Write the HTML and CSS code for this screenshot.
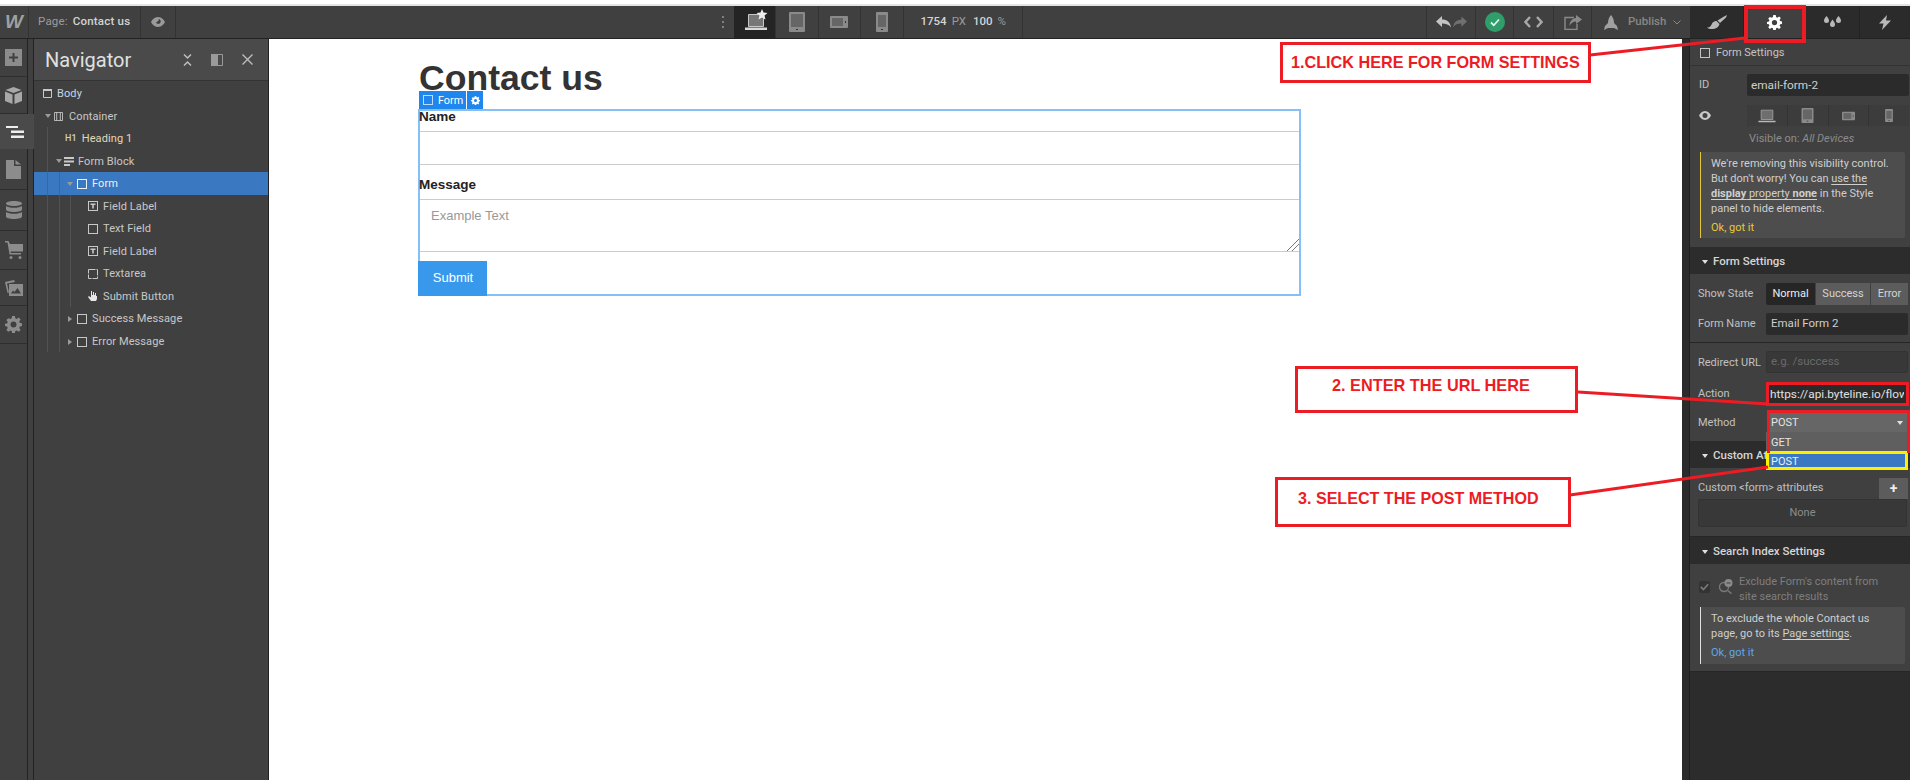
FILE: index.html
```html
<!DOCTYPE html>
<html lang="en">
<head>
<meta charset="utf-8">
<title>Contact us</title>
<link rel="stylesheet" href="styles.css">
</head>
<body>
<svg class="defs" width="0" height="0">
  <defs>
    <symbol id="laptop" viewBox="0 0 22 18"><path fill="#6e6e6e" stroke="#a8a8a8" d="M3.500 1.500h15v12h-15z"/><path fill="#b8b8b8" d="M0 15h22v2H0z"/></symbol>
    <symbol id="tablet" viewBox="0 0 16 20"><rect width="16" height="20" rx="1" fill="#8a8a8a"/><rect x="2" y="2" width="12" height="13" fill="#666"/><rect x="7" y="17" width="2" height="1" fill="#333"/></symbol>
    <symbol id="land" viewBox="0 0 18 12"><rect width="18" height="12" rx="1" fill="#8a8a8a"/><rect x="2" y="2" width="11" height="8" fill="#666"/><rect x="15" y="5" width="1" height="2" fill="#333"/></symbol>
    <symbol id="phone" viewBox="0 0 12 20"><rect width="12" height="20" rx="1" fill="#8a8a8a"/><rect x="2" y="3" width="8" height="12" fill="#666"/><rect x="5" y="17" width="2" height="1" fill="#333"/></symbol>
    <symbol id="gear" viewBox="0 0 16 16"><path fill="currentColor" fill-rule="evenodd" d="M6.700 0h2.600l.4 2.200 1.300.6L12.900 1.500l1.800 1.800-1.300 1.900.6 1.300 2 .4v2.600l-2 .4-.6 1.300 1.300 1.900-1.800 1.800-1.900-1.300-1.300.6-.4 2.200H6.700l-.4-2.200-1.300-.6-1.900 1.300-1.800-1.800 1.300-1.900-.6-1.300-2-.4V7.400l2-.4.6-1.300-1.300-1.900 1.800-1.800L5 2.800l1.300-.6zM8 5.200a2.800 2.800 0 1 0 0 5.600 2.800 2.800 0 0 0 0-5.600z"/></symbol>
    <symbol id="box" viewBox="0 0 10 10"><rect x=".5" y=".5" width="9" height="9" fill="none" stroke="currentColor"/></symbol>
    <symbol id="tfield" viewBox="0 0 10 10"><rect x=".5" y=".5" width="9" height="9" fill="none" stroke="currentColor"/><path fill="currentColor" d="M2.500 2.500h5v1.500h-1.700v3.500H4.200V4H2.500z"/></symbol>
    <symbol id="check" viewBox="0 0 12 12"><path fill="none" stroke="currentColor" stroke-width="1.800" d="M2 6.500l2.800 2.800L10 3.500"/></symbol>
  </defs>
</svg>

<div class="app">
  <div class="strip"></div>

  <header class="topbar">
    <div class="cell logo-cell"><span class="logo">W</span></div>
    <div class="cell page-cell"><span class="dim">Page:</span><span class="page-name">Contact us</span></div>
    <div class="cell eye-cell">
      <svg width="14" height="12" viewBox="0 0 14 12"><path fill="#9a9a9a" fill-rule="evenodd" d="M7 1C3.500 1 1 4 0 6c1 2 3.500 5 7 5s6-3 7-5c-1-2-3.500-5-7-5zm1 2a2.500 2.500 0 1 1-3 3.500A4 4 0 0 0 8 3z"/></svg>
    </div>
    <div class="top-center">
      <div class="dots"><i></i><i></i><i></i></div>
      <div class="dev dev-active">
        <svg class="dev-ic" width="24" height="22" viewBox="0 0 24 22"><path fill="#777" stroke="#c8c8c8" d="M3.500 5.500h15v12h-15z"/><path fill="#d8d8d8" d="M0 18.500h22v2.500H0z"/><path fill="#eee" d="M17 0l1.500 3.500L22.500 4l-3 2.500 1 4-3.500-2-3.500 2 1-4-3-2.500 4-.5z"/></svg>
      </div>
      <div class="dev"><svg width="16" height="20"><use href="#tablet"/></svg></div>
      <div class="dev"><svg width="18" height="12"><use href="#land"/></svg></div>
      <div class="dev"><svg width="12" height="20"><use href="#phone"/></svg></div>
      <div class="size"><b>1754</b><span>PX</span><b>100</b><span>%</span></div>
    </div>
    <div class="top-right">
      <div class="tool tool-undo">
        <svg width="15" height="12" viewBox="0 0 15 12"><path fill="#c4c4c4" d="M6 0v3.500c5 0 8 2.500 9 8-2-3-5-4-9-4V11L0 5.500z"/></svg>
        <svg width="14" height="12" viewBox="0 0 15 12"><path fill="#707070" d="M9 0v3.500c-5 0-8 2.500-9 8 2-3 5-4 9-4V11l6-5.500z"/></svg>
      </div>
      <div class="tool tool-ok"><span class="okdot"><svg width="12" height="12"><use href="#check"/></svg></span></div>
      <div class="tool tool-code">
        <svg width="19" height="12" viewBox="0 0 19 12"><path fill="none" stroke="#a8a8a8" stroke-width="2.400" d="M6 1L1.500 6 6 11M13 1l4.500 5L13 11"/></svg>
      </div>
      <div class="tool tool-share">
        <svg width="18" height="15" viewBox="0 0 18 15"><path fill="none" stroke="#8a8a8a" stroke-width="1.400" d="M10 2.500H1v12h12V9"/><path fill="#8a8a8a" d="M12 0l6 4.500L12 9V6.500C9 6.500 7 8 5.500 11c0-4 2-7.500 6.500-8z"/></svg>
      </div>
      <div class="tool tool-pub">
        <svg width="16" height="15" viewBox="0 0 16 15"><path fill="#a0a0a0" d="M8 0c2 2 3 5 3 8l3 3 1 4-4-2H5l-4 2 1-4 3-3c0-3 1-6 3-8z"/></svg>
        <span class="pub-text">Publish</span>
        <svg width="8" height="5" viewBox="0 0 8 5"><path fill="none" stroke="#8a8a8a" d="M.5.500L4 4 7.500.5"/></svg>
      </div>
    </div>
    <nav class="tabs">
      <div class="tab">
        <svg width="20" height="14" viewBox="0 0 20 14"><path fill="#b8b8b8" d="M20 0l-1 2.500-6 5.500-2.500-2.500L17 1.500zM9.500 6l3 3c-.5 3-4 5-7.500 5-2 0-4-.5-5-1.500 3.500 0 4-2 5-4 1-1.800 2.800-2.700 4.500-2.500z"/></svg>
      </div>
      <div class="tab tab-on"><svg class="gear-w" width="15" height="15"><use href="#gear"/></svg></div>
      <div class="tab">
        <svg width="17" height="13" viewBox="0 0 17 13"><path fill="#b8b8b8" d="M2.500 0C4 2 5 3.200 5 4.500a2.500 2.500 0 0 1-5 0C0 3.200 1 2 2.500 0zM14.500 0C16 2 17 3.200 17 4.500a2.500 2.500 0 0 1-5 0c0-1.300 1-2.500 2.500-4.500zM8.500 3.500C10 5.500 11 6.900 11 8.500a2.500 2.500 0 0 1-5 0c0-1.600 1-3 2.500-5z"/></svg>
      </div>
      <div class="tab tab-last">
        <svg width="12" height="15" viewBox="0 0 12 15"><path fill="#b8b8b8" d="M8 0L0 8.500h4.500L3 15l9-9.500H7z"/></svg>
      </div>
    </nav>
  </header>

  <div class="main">
    <aside class="rail">
      <div class="rail-item r-add"><svg width="17" height="17" viewBox="0 0 17 17"><path fill="#8c8c8c" fill-rule="evenodd" d="M0 0h17v17H0zm7.500 4v3.500H4v2h3.500V13h2V9.500H13v-2H9.500V4z"/></svg></div>
      <div class="rail-item r-cube"><svg width="17" height="17" viewBox="0 0 17 17"><path fill="#a8a8a8" d="M8.500 0l8 3-8 3-8-3zM0 4.500l7.500 3V17L0 14zM17 4.500l-7.500 3V17l7.500-3z"/></svg></div>
      <div class="rail-item r-nav"><svg width="18" height="12" viewBox="0 0 18 12"><path fill="#eee" d="M0 0h12v2H0zM5 4.500h13v2.500H5zM5 9.500h13V12H5z"/></svg></div>
      <div class="rail-item r-pages"><svg width="15" height="19" viewBox="0 0 15 19"><path fill="#8c8c8c" d="M0 0h8v6h7v13H0zM9.500 0L15 4.500H9.500z"/></svg></div>
      <div class="rail-item r-cms"><svg width="16" height="18" viewBox="0 0 16 18"><path fill="#8c8c8c" d="M8 0c4.500 0 8 1 8 2.500S12.500 5 8 5 0 4 0 2.500 3.500 0 8 0zM0 5c1.500 1.200 4.500 1.800 8 1.800S14.500 6.200 16 5v3.500c0 1.500-3.500 2.500-8 2.500s-8-1-8-2.500zM0 11c1.500 1.200 4.500 1.800 8 1.800s6.500-.6 8-1.800v4.500c0 1.500-3.500 2.500-8 2.500s-8-1-8-2.500z"/></svg></div>
      <div class="rail-item r-cart"><svg width="18" height="18" viewBox="0 0 18 18"><path fill="#8c8c8c" d="M0 0h3.500L5 3h13v7.500H5.500L5.800 12H16v1.500H4.500L2.500 1.500H0z"/><circle cx="6" cy="16.500" r="1.500" fill="#8c8c8c"/><circle cx="15" cy="16.500" r="1.500" fill="#8c8c8c"/></svg></div>
      <div class="rail-item r-assets"><svg width="18" height="16" viewBox="0 0 18 16"><path fill="#8c8c8c" d="M0 2l9-2 1 2-8 1.500 2 9-1.500.5z"/><path fill="#8c8c8c" fill-rule="evenodd" d="M4 4h14v12H4zm2 9.500h10L12.500 8 9.500 12 8 10.500z"/></svg></div>
      <div class="rail-item r-set"><svg class="gear-g" width="17" height="17"><use href="#gear"/></svg></div>
    </aside>
    <div class="rail-gap"></div>

    <section class="nav">
      <div class="nav-head">
        <h2 class="nav-title">Navigator</h2>
        <svg width="9" height="12" viewBox="0 0 9 12"><path fill="none" stroke="#bdbdbd" stroke-width="1.500" d="M1 .5l3.500 3.500L8 .5M1 11.500L4.500 8 8 11.500"/></svg>
        <svg width="12" height="12" viewBox="0 0 12 12"><path fill="#9a9a9a" d="M0 0h7v12H0z"/><path fill="none" stroke="#9a9a9a" d="M7 .5h4.500v11H7"/></svg>
        <svg width="11" height="11" viewBox="0 0 11 11"><path fill="none" stroke="#bdbdbd" stroke-width="1.400" d="M.5.500l10 10M10.500.5l-10 10"/></svg>
      </div>
      <ul class="tree">
        <li class="row lv-body"><svg width="9" height="9" viewBox="0 0 9 9"><path fill="none" stroke="currentColor" d="M.5.500h8v8h-8z"/><path fill="currentColor" d="M0 0h9v2H0z"/></svg><span class="t-blue">Body</span></li>
        <li class="row lv-cont"><i class="tri"></i><svg width="9" height="9" viewBox="0 0 10 10"><path fill="none" stroke="currentColor" d="M.5.500h9v9h-9zM3 .5v9M7 .5v9"/></svg><span>Container</span></li>
        <li class="row lv-head"><b class="h1">H1</b><span class="t-gold">Heading 1</span></li>
        <li class="row lv-fblock"><i class="tri"></i><svg width="10" height="9" viewBox="0 0 10 9"><path fill="currentColor" d="M0 0h10v2H0zM0 3.500h10v2H0zM0 7h6v2H0z"/></svg><span>Form Block</span></li>
        <li class="row lv-form row-on"><i class="tri"></i><svg width="10" height="10"><use href="#box"/></svg><span>Form</span></li>
        <li class="row lv-leaf"><svg width="10" height="10"><use href="#tfield"/></svg><span>Field Label</span></li>
        <li class="row lv-leaf"><svg width="10" height="10"><use href="#box"/></svg><span>Text Field</span></li>
        <li class="row lv-leaf"><svg width="10" height="10"><use href="#tfield"/></svg><span>Field Label</span></li>
        <li class="row lv-leaf"><svg width="10" height="10" viewBox="0 0 10 10"><path fill="none" stroke="currentColor" stroke-dasharray="7 1" d="M.5.500h9v9h-9z"/></svg><span>Textarea</span></li>
        <li class="row lv-leaf"><svg width="10" height="10" viewBox="0 0 10 10"><path fill="#e6e6e6" d="M3 0h1v4h1V1h1v3h1V2h1v3h1v3l-1 2H3L0 6l1-1 2 1.500z"/></svg><span>Submit Button</span></li>
        <li class="row lv-form"><i class="tri tri-r"></i><svg width="10" height="10"><use href="#box"/></svg><span>Success Message</span></li>
        <li class="row lv-form"><i class="tri tri-r"></i><svg width="10" height="10"><use href="#box"/></svg><span>Error Message</span></li>
        <li class="guide g1"></li>
        <li class="guide g2"></li>
        <li class="guide g3"></li>
      </ul>
    </section>

    <main class="canvas">
      <div class="container">
        <h1 class="title">Contact us</h1>
        <form class="form">
          <div class="form-tag">
            <span class="tag-name"><svg width="10" height="10"><use href="#box"/></svg>Form</span>
            <span class="tag-gear"><svg width="9" height="9"><use href="#gear"/></svg></span>
          </div>
          <div class="label label-first">Name</div>
          <div class="input"></div>
          <div class="label">Message</div>
          <div class="input area">Example Text
            <svg class="grip" width="12" height="12" viewBox="0 0 12 12"><path fill="none" stroke="#777" d="M0 12L12 0M5 12l7-7"/></svg>
          </div>
          <div class="submit">Submit</div>
        </form>
      </div>
    </main>

    <div class="gutter"></div>

    <aside class="panel">
      <div class="selected"><svg width="10" height="10"><use href="#box"/></svg><span>Form Settings</span></div>

      <div class="block block-id">
        <div class="id-row"><span class="lbl">ID</span><div class="field field-id">email-form-2</div></div>
        <div class="id-row vis-row">
          <svg class="eye" width="12" height="9" viewBox="0 0 12 9"><path fill="#c8c8c8" fill-rule="evenodd" d="M6 0C3 0 1 2.500 0 4.500 1 6.500 3 9 6 9s5-2.500 6-4.500C11 2.500 9 0 6 0zm0 2a2.500 2.500 0 1 1 0 5 2.500 2.500 0 0 1 0-5z"/></svg>
          <div class="seg4">
            <span><svg width="20" height="14"><use href="#laptop"/></svg></span>
            <span><svg width="13" height="15"><use href="#tablet"/></svg></span>
            <span><svg width="13" height="10"><use href="#land"/></svg></span>
            <span><svg width="10" height="13"><use href="#phone"/></svg></span>
          </div>
        </div>
        <div class="visible">Visible on: <em>All Devices</em></div>
        <div class="notice notice-y">
          <p>We're removing this visibility control.<br>But don't worry! You can <u>use the</u><br><u><b>display</b> property <b>none</b></u> in the Style<br>panel to hide elements.</p>
          <div class="got got-y">Ok, got it</div>
        </div>
      </div>

      <div class="sec-head"><i class="tri tri-w"></i>Form Settings</div>
      <div class="block block-state">
        <div class="form-row"><span class="lbl">Show State</span>
          <div class="seg3"><span class="seg-on">Normal</span><span class="seg-s">Success</span><span class="seg-e">Error</span></div>
        </div>
        <div class="form-row form-row-2"><span class="lbl">Form Name</span><div class="field">Email Form 2</div></div>
      </div>
      <div class="block block-redirect">
        <div class="form-row"><span class="lbl lbl-low">Redirect URL</span><div class="field field-ph">e.g. /success</div></div>
        <div class="form-row action-row"><span class="lbl">Action</span><div class="field field-action"><span class="clip">https://api.byteline.io/flow</span></div></div>
        <div class="form-row method-row"><span class="lbl">Method</span>
          <div class="select"><span>POST</span><i class="tri tri-w"></i></div>
          <div class="dropdown">
            <div class="opt">GET</div>
            <div class="opt opt-on">POST</div>
          </div>
        </div>
      </div>
      <div class="sec-head"><i class="tri tri-w"></i>Custom Attributes</div>
      <div class="block block-attr">
        <div class="attr-row"><span class="lbl">Custom &lt;form&gt; attributes</span><span class="plus">+</span></div>
        <div class="none">None</div>
      </div>
      <div class="sec-head"><i class="tri tri-w"></i>Search Index Settings</div>
      <div class="block block-search">
        <div class="exclude">
          <span class="chk"><svg width="11" height="11"><use href="#check"/></svg></span>
          <svg class="search-ic" width="15" height="15" viewBox="0 0 15 15"><circle cx="6" cy="8" r="4.500" fill="none" stroke="#7a7a7a" stroke-width="1.300"/><path stroke="#7a7a7a" stroke-width="1.500" d="M9.500 11.500l4 3"/><circle cx="10.500" cy="4" r="4" fill="#8a8a8a"/><path stroke="#404040" d="M8.500 4h4"/></svg>
          <span class="ex-text">Exclude Form's content from<br>site search results</span>
        </div>
        <div class="notice notice-w">
          <p>To exclude the whole Contact us<br>page, go to its <u>Page settings</u>.</p>
          <div class="got got-b">Ok, got it</div>
        </div>
      </div>
      <div class="panel-end"></div>
    </aside>
  </div>

  <svg class="lines" width="1910" height="780" viewBox="0 0 1910 780">
    <path d="M1590 55L1745 38M1578 392L1768 404M1570 495L1768 467" fill="none" stroke="#ed1c24" stroke-width="3"/>
  </svg>
  <div class="red-tab"></div>
  <div class="red-method"></div>
  <div class="note note-1">1.CLICK HERE FOR FORM SETTINGS</div>
  <div class="note note-2">2. ENTER THE URL HERE</div>
  <div class="note note-3">3. SELECT THE POST METHOD</div>
</div>
</body>
</html>
```

FILE: styles.css
```css
* { box-sizing: border-box; }
html, body { margin: 0; height: 100%; overflow: hidden; background: #fff; }
body { font: 11px/1.2 Roboto, "Liberation Sans", sans-serif; color: #d9d9d9; }
.defs { position: absolute; }
svg { display: block; flex: none; }
p { margin: 0; }
ul { margin: 0; padding: 0; list-style: none; }

.app { position: relative; width: 1910px; height: 780px; display: flex; flex-direction: column; }
.strip { height: 6px; flex: none; background: linear-gradient(#fff 0, #fff 4px, #e4e4e4 4px); }

/* top bar */
.topbar { height: 33px; flex: none; display: flex; background: #404040; border-bottom: 1px solid #222; }
.cell { display: flex; align-items: center; border-right: 1px solid #333; }
.logo-cell { width: 29px; justify-content: center; }
.logo { font: italic 700 19px "Liberation Sans", sans-serif; color: #a0a0a0; }
.page-cell { width: 112px; padding-left: 9px; font-size: 11.500px; letter-spacing: .2px; }
.dim { color: #9c9c9c; margin-right: 5px; }
.page-name { color: #d4d4d4; font-weight: 500; }
.eye-cell { width: 35px; justify-content: center; }
.top-center { margin-left: 535px; display: flex; align-items: stretch; }
.dots { width: 23px; display: flex; flex-direction: column; gap: 3px; justify-content: center; align-items: center; }
.dots i { width: 2px; height: 2px; background: #808080; }
.dev { width: 42.500px; display: flex; align-items: center; justify-content: center; border-right: 1px solid #333; }
.dev-active { background: #242424; width: 42px; }
.dev-ic { margin-top: -4px; margin-left: 4px; }
.size { width: 119px; padding-left: 17px; display: flex; align-items: center; font-size: 11.500px; border-right: 1px solid #333; }
.size b { font-weight: 500; color: #d4d4d4; }
.size span { color: #9a9a9a; margin: 0 7px 0 5px; }
.top-right { margin-left: auto; display: flex; }
.tool { display: flex; align-items: center; justify-content: center; border-left: 1px solid #333; }
.tool-undo { width: 49px; gap: 2px; }
.tool-ok { width: 38px; }
.okdot { width: 20px; height: 20px; border-radius: 50%; background: #2f9e6b; color: #e6f2ec; display: flex; align-items: center; justify-content: center; }
.tool-code { width: 40px; }
.tool-share { width: 38px; }
.tool-pub { width: 99px; gap: 6px; justify-content: flex-start; padding-left: 11px; }
.pub-text { color: #888; font-size: 11.500px; font-weight: 500; margin-left: 3px; margin-right: 1px; }
.tabs { width: 220px; display: flex; background: #2b2b2b; }
.tab { width: 54px; display: flex; align-items: center; justify-content: center; border-right: 1px solid #222; }
.tab-on { width: 62px; background: #404040; }
.tab-last { width: 50px; border-right: 0; }
.gear-w { color: #fff; }
.gear-g { color: #8c8c8c; }

/* main */
.main { flex: 1; min-height: 0; display: flex; }
.rail { width: 28px; flex: none; background: #404040; border-right: 1px solid #222; display: flex; flex-direction: column; }
.rail-item { display: flex; align-items: center; justify-content: center; border-bottom: 1px solid #2e2e2e; }
.r-add { height: 38px; }
.r-cube { height: 37px; }
.r-nav { height: 35px; width: 34px; background: #4a4a4a; position: relative; border-bottom: 0; padding-right: 5px; }
.r-pages { height: 41px; }
.r-cms { height: 41px; }
.r-cart { height: 39px; }
.r-assets { height: 36px; }
.r-set { height: 38px; }
.rail-gap { width: 6px; flex: none; background: #404040; border-right: 1px solid #222; }

/* navigator */
.nav { width: 235px; flex: none; background: #404040; border-right: 1px solid #222; display: flex; flex-direction: column; }
.nav-head { height: 42px; flex: none; display: flex; align-items: center; gap: 19px; padding: 0 15px 0 11px; background: #4a4a4a; border-bottom: 1px solid #333; }
.nav-title { margin: 0 auto 0 0; font: 400 20px Roboto, sans-serif; color: #e0e0e0; }
.tree { position: relative; flex: 1; padding-top: 1.300px; }
.row { height: 22.550px; display: flex; align-items: center; color: #c8c8c8; gap: 5px; font-size: 11px; letter-spacing: .1px; white-space: nowrap; position: relative; }
.row-on { background: #3a78c2; color: #f0f0f0; }
.t-blue { color: #c4d6e8; }
.t-gold { color: #e2d8b8; }
.tri { width: 0; height: 0; border-style: solid; border-width: 4px 3px 0; border-color: #9a9a9a transparent transparent; flex: none; }
.tri-r { border-width: 3px 0 3px 4px; border-color: transparent transparent transparent #9a9a9a; margin: 0 1px; }
.tri-w { border-color: #e0e0e0 transparent transparent; }
.h1 { font-size: 9px; font-weight: 500; color: #d0d0d0; margin-right: 0; }
.lv-body { padding-left: 9px; }
.lv-cont { padding-left: 11px; gap: 3px; }
.lv-cont span { margin-left: 3px; }
.lv-head { padding-left: 31px; gap: 5px; }
.lv-fblock { padding-left: 22px; gap: 2px; }
.lv-fblock span { margin-left: 2px; }
.lv-form { padding-left: 33px; gap: 4px; }
.lv-form span { margin-left: 1px; }
.lv-leaf { padding-left: 54px; }
.guide { position: absolute; width: 1px; background: #5a5a5a; opacity: .7; }
.g1 { left: 13px; top: 46px; height: 225px; }
.g2 { left: 25px; top: 91px; height: 180px; }
.g3 { left: 36px; top: 114px; height: 112px; }

/* canvas */
.canvas { flex: 1; min-width: 0; background: #fff; padding: 26px 0 0 150px; }
.container { width: 882px; }
.title { margin: 0; font: 700 35.600px/26px "Liberation Sans", Arial, sans-serif; color: #333; white-space: nowrap; }
.form { position: relative; margin: 18px 0 0 -1px; width: 883px; height: 187px; border: 2px solid #86bff6; color: #222; font-family: "Liberation Sans", Arial, sans-serif; }
.form-tag { position: absolute; left: -1px; top: -20px; height: 18px; display: flex; gap: 1px; color: #fff; font: 10.800px Roboto, sans-serif; }
.tag-name { width: 47px; background: #1f86ee; display: flex; align-items: center; gap: 5px; padding-left: 4px; }
.tag-name svg { color: #bcdcff; }
.tag-gear { width: 16px; background: #1f86ee; display: flex; align-items: center; justify-content: center; }
.label { height: 25px; padding-top: 1px; line-height: 20px; font-weight: 700; font-size: 13.500px; margin-top: 9px; margin-left: -1px; }
.label-first { margin-top: 0; padding-top: 0; height: 20px; line-height: 11px; }
.input { height: 34px; border: solid #ccc; border-width: 1px 0; }
.area { position: relative; height: 53px; padding: 7px 11px; color: #999; font-size: 13px; line-height: 18px; }
.grip { position: absolute; right: 0; bottom: 0; }
.submit { position: absolute; left: -2px; bottom: -2px; width: 69px; height: 35px; padding: 0 0 1px 1px; background: #3898ec; color: #fff; font-size: 13px; display: flex; align-items: center; justify-content: center; }

.gutter { width: 8px; flex: none; background: #2b2b2b; border-right: 1px solid #1f1f1f; }

/* panel */
.panel { width: 220px; flex: none; background: #2c2c2c; display: flex; flex-direction: column; font-size: 11px; }
.selected { height: 27px; flex: none; display: flex; align-items: center; gap: 6px; padding: 2px 0 0 10px; background: #404040; border-bottom: 1px solid #333; color: #c4c4c4; font-size: 11px; }
.block { background: #404040; padding: 0 5px 0 8px; border-bottom: 1px solid #262626; flex: none; }
.lbl { color: #c0c0c0; }
.lbl-low { position: relative; top: 1px; }
.block-id { height: 181px; padding: 8px 1px 0 9px; border-bottom: 0; }
.id-row { display: flex; align-items: center; justify-content: space-between; padding-right: 0; }
.vis-row { margin-top: 9px; }
.field { background: #2b2b2b; border-radius: 2px; color: #cfcfcf; height: 22px; display: flex; align-items: center; padding: 0 4px; font-size: 11.500px; white-space: nowrap; overflow: hidden; border: 1px solid #2b2b2b; }
.field-id { width: 162px; font-size: 11.800px; padding-left: 3px; }
.eye { margin-left: 0; }
.seg4 { width: 162px; height: 21px; display: flex; gap: 1px; background: #333; border-radius: 2px; overflow: hidden; }
.seg4 span { flex: 1; background: #3c3c3c; display: flex; align-items: center; justify-content: center; }
.visible { margin: 6px 0 0 50px; color: #8c8c8c; font-size: 11px; line-height: 13px; }
.visible em { font-style: italic; }
.notice { background: #4d4d4d; border-radius: 0 2px 2px 0; padding: 4px 9px 0 10px; width: 205px; margin-left: 1px; font-size: 11px; line-height: 15px; color: #cfcfcf; }
.notice-y { height: 86px; margin-top: 7px; border-left: 1px solid #e4c83a; }
.notice u { text-underline-offset: 2px; }
.notice b { font-weight: 700; }
.got { margin-top: 4px; }
.got-y { color: #e8c93a; }
.got-b { color: #5fa8e8; }
.sec-head { height: 27px; flex: none; display: flex; align-items: center; gap: 5px; padding: 2px 0 0 12px; background: #2c2c2c; color: #d6d6d6; font-weight: 500; font-size: 11.500px; }
.block-state { height: 69px; padding-top: 9px; }
.form-row { display: grid; grid-template-columns: 68px 142px; align-items: center; position: relative; }
.form-row-2 { margin-top: 8px; }
.seg3 { height: 22px; display: flex; gap: 1px; }
.seg3 span { display: flex; align-items: center; justify-content: center; background: #5c5c5c; color: #d4d4d4; }
.seg-on { width: 49px; background: #262626 !important; color: #eee !important; border-radius: 2px 0 0 2px; }
.seg-s { width: 54px; }
.seg-e { width: 37px; }
.block-redirect { height: 98px; padding-top: 8px; border-bottom: 0; }
.field-ph { color: #6a6a6a; background: #383838; border-color: #333; }
.action-row { margin-top: 9px; }
.field-action { height: 24px; width: 143px; padding: 0 2px 0 1px; border: 3px solid #ed1c24; border-radius: 0; background: #2b2b2b; color: #e0e0e0; font-size: 11.800px; }
.clip { display: block; width: 100%; overflow: hidden; }
.method-row { margin-top: 7px; }
.select { height: 19px; padding: 1px 5px 0 4px; background: #666; color: #e4e4e4; display: flex; align-items: center; justify-content: space-between; width: 141px; margin-left: 1px; font-size: 11px; position: relative; z-index: 3; }
.dropdown { position: absolute; left: 68px; top: 19px; width: 142px; z-index: 2; font-size: 11px; }
.opt { height: 19px; background: #5f5f5f; color: #e6e6e6; padding-left: 5px; line-height: 21px; }
.opt-on { height: 19px; background: #3a78c2; color: #f0f0f0; border: 3px solid #ffee00; line-height: 15px; padding-left: 2px; }
.block-attr { height: 69px; padding-top: 9px; }
.attr-row { display: flex; align-items: center; justify-content: space-between; height: 22px; padding-right: 0; }
.plus { width: 29px; height: 21px; background: #5c5c5c; color: #eee; font-weight: 700; font-size: 14px; display: flex; align-items: center; justify-content: center; margin-right: -3px; }
.none { height: 28px; width: 209px; background: #383838; border: 1px solid #333; color: #8c8c8c; display: flex; align-items: center; justify-content: center; border-radius: 2px; }
.block-search { height: 108px; padding: 11px 0 0 9px; }
.exclude { display: flex; align-items: flex-start; color: #7e7e7e; font-size: 11px; line-height: 14.500px; height: 29px; }
.chk { width: 11px; height: 12px; margin-top: 6px; background: #333; color: #7a7a7a; border-radius: 2px; }
.search-ic { margin: 4px 6px 0 8px; }
.notice-w { height: 57px; margin-top: 3px; border-left: 1px solid #e0e0e0; }
.panel-end { flex: 1; background: #2c2c2c; }

/* annotations over the screenshot */
.lines { position: absolute; left: 0; top: 0; pointer-events: none; z-index: 5; }
.red-tab { position: absolute; left: 1744px; top: 5px; width: 62px; height: 38px; border: 4px solid #ed1c24; z-index: 6; }
.red-method { position: absolute; left: 1767px; top: 410px; width: 143px; height: 43px; border: 3px solid #ed1c24; border-bottom-width: 0; z-index: 6; }
.note { position: absolute; background: #fff; border: 3px solid #ed1c24; color: #ed1c24; font: 700 16.200px "Liberation Sans", Arial, sans-serif; white-space: nowrap; z-index: 7; }
.note-1 { left: 1280px; top: 42px; width: 311px; height: 41px; padding: 8px 0 0 8px; }
.note-2 { left: 1295px; top: 366px; width: 283px; height: 47px; padding: 7px 0 0 34px; font-size: 16.300px; }
.note-3 { left: 1275px; top: 477px; width: 296px; height: 50px; padding: 9px 0 0 20px; font-size: 16.100px; }
```
